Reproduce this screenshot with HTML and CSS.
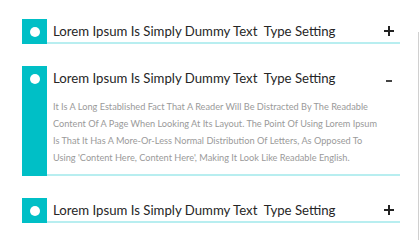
FILE: index.html
```html
<!DOCTYPE html>
<html>
<head>
<meta charset="utf-8">
<link rel="stylesheet" href="styles.css">
</head>
<body>
<div class="accordion">
  <div class="item">
    <div class="marker"><span class="dot"></span></div>
    <div class="content">
      <div class="head">
        <span class="title">Lorem Ipsum Is Simply Dummy Text&nbsp; Type Setting</span>
        <span class="plus"></span>
      </div>
    </div>
  </div>
  <div class="item open">
    <div class="marker"><span class="dot"></span></div>
    <div class="content">
      <div class="head">
        <span class="title">Lorem Ipsum Is Simply Dummy Text&nbsp; Type Setting</span>
        <span class="minus"></span>
      </div>
      <p class="body">It Is A Long Established Fact That A Reader Will Be Distracted By The Readable Content Of A Page When Looking At Its Layout. The Point Of Using Lorem Ipsum Is That It Has A More-Or-Less Normal Distribution Of Letters, As Opposed To Using 'Content Here, Content Here', Making It Look Like Readable English.</p>
    </div>
  </div>
  <div class="item">
    <div class="marker"><span class="dot"></span></div>
    <div class="content">
      <div class="head">
        <span class="title">Lorem Ipsum Is Simply Dummy Text&nbsp; Type Setting</span>
        <span class="plus"></span>
      </div>
    </div>
  </div>
</div>
<div class="edge"></div>
</body>
</html>
```
FILE: styles.css
```css
html, body { margin: 0; padding: 0; background: #fff; }
body {
  width: 420px; height: 240px; overflow: hidden; position: relative;
  font-family: Lato, "Open Sans", sans-serif;
}
.accordion {
  padding: 19px 0 0 22px;
  width: 378px;
  display: flex; flex-direction: column; gap: 22px;
}
.item { display: flex; align-items: stretch; }
.marker {
  width: 25px; flex: none; background: #00bfc6;
  display: flex; justify-content: center; align-items: center;
}
.open .marker { align-items: flex-start; padding-top: 8px; }
.dot { width: 10px; height: 10px; border-radius: 50%; background: #fff; display: block; }
.content { flex: 1; border-bottom: 2px solid #b8eef0; padding-left: 6px; }
.head { display: flex; align-items: center; justify-content: space-between; height: 23px; padding-right: 6px; }
.title { font-size: 13.2px; color: #262626; white-space: nowrap; }
.plus { width: 10px; height: 10px; position: relative; }
.plus::before, .plus::after { content: ""; position: absolute; background: #222; }
.plus::before { left: 0; right: 0; top: 4px; height: 2px; }
.plus::after { top: 0; bottom: 0; left: 4px; width: 2px; }
.minus { width: 6px; height: 2px; background: #444; margin-right: 2px; margin-top: 6px; }
.body {
  margin: 9px 0 0; padding: 0 23px 8px 0;
  font-size: 9.2px; line-height: 17px; color: #9a9a9a;
}
.edge {
  position: absolute; left: 418px; top: 32px; bottom: 0; width: 1px; background: #d0d0d0;
}
```
